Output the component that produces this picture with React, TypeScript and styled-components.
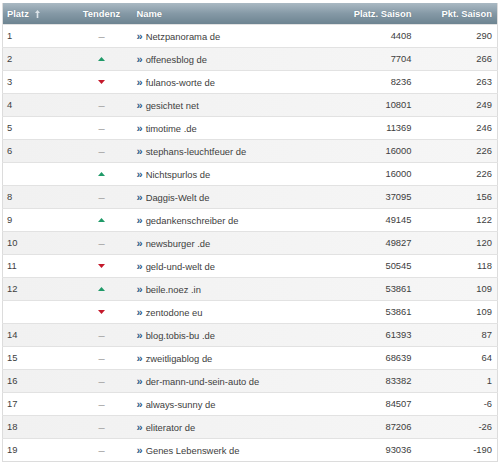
import React from "react";
import styled, { createGlobalStyle } from "styled-components";

const Global = createGlobalStyle`
  html, body { margin: 0; padding: 0; background: #fff; }
  body { font-family: "Liberation Sans", Arial, sans-serif; }
`;

const Wrap = styled.div`
  padding: 3px 3px 0 2px;
`;

const Table = styled.table`
  width: 495px;
  border-collapse: collapse;
  table-layout: fixed;
  font-family: "Liberation Sans", Arial, sans-serif;
  font-size: 9.4px;
  color: #404040;
  border-left: 1px solid #dcdcdc;
  border-right: 1px solid #dcdcdc;
  border-bottom: 1px solid #dcdcdc;
`;

const HeadRow = styled.tr`
  height: 21px;
  background: linear-gradient(to bottom, #aab9c3 0%, #8599a6 50%, #6d8491 100%);
`;

const Th = styled.th<{ $align?: string; $pr?: number; $pl?: number }>`
  color: #fff;
  font-weight: bold;
  font-size: 9.4px;
  text-align: ${(p) => p.$align || "left"};
  padding: 0 ${(p) => p.$pr ?? 4}px 0 ${(p) => p.$pl ?? 4}px;
  text-shadow: 0 0 1px rgba(60, 80, 95, 0.5);
  white-space: nowrap;
`;

const SortIcon = styled.svg`
  margin-left: 6px;
  vertical-align: -1px;
`;

const Row = styled.tr<{ $alt: boolean }>`
  height: 23px;
  background: ${(p) =>
    p.$alt ? "linear-gradient(to right, #f1f1f1, #f6f6f6)" : "#fff"};
  border-top: 1px solid #e2e2e2;
`;

const Td = styled.td<{ $align?: string; $pr?: number; $pl?: number }>`
  text-align: ${(p) => p.$align || "left"};
  padding: 0 ${(p) => p.$pr ?? 4}px 0 ${(p) => p.$pl ?? 4}px;
  white-space: nowrap;
  overflow: hidden;
`;

const Dash = styled.span`
  color: #a0a0a0;
  font-size: 11px;
`;

const Chevron = styled.span`
  color: #2f5c88;
  font-weight: bold;
  font-size: 11px;
  margin-right: 3px;
`;

type Trend = "up" | "down" | "same";

const TrendIcon = ({ t }: { t: Trend }) => {
  if (t === "same") return <Dash>–</Dash>;
  if (t === "up")
    return (
      <svg width="7" height="4" viewBox="0 0 7 4" style={{ verticalAlign: 1 }}>
        <polygon points="0,4 7,4 3.5,0" fill="#1f9a68" />
      </svg>
    );
  return (
    <svg width="7" height="4" viewBox="0 0 7 4" style={{ verticalAlign: 1 }}>
      <polygon points="0,0 7,0 3.5,4" fill="#c4182a" />
    </svg>
  );
};

const data: [string, Trend, string, number, number][] = [
  ["1", "same", "Netzpanorama de", 4408, 290],
  ["2", "up", "offenesblog de", 7704, 266],
  ["3", "down", "fulanos-worte de", 8236, 263],
  ["4", "same", "gesichtet net", 10801, 249],
  ["5", "same", "timotime .de", 11369, 246],
  ["6", "same", "stephans-leuchtfeuer de", 16000, 226],
  ["", "up", "Nichtspurlos de", 16000, 226],
  ["8", "same", "Daggis-Welt de", 37095, 156],
  ["9", "up", "gedankenschreiber de", 49145, 122],
  ["10", "same", "newsburger .de", 49827, 120],
  ["11", "down", "geld-und-welt de", 50545, 118],
  ["12", "up", "beile.noez .in", 53861, 109],
  ["", "down", "zentodone eu", 53861, 109],
  ["14", "same", "blog.tobis-bu .de", 61393, 87],
  ["15", "same", "zweitligablog de", 68639, 64],
  ["16", "same", "der-mann-und-sein-auto de", 83382, 1],
  ["17", "same", "always-sunny de", 84507, -6],
  ["18", "same", "eliterator de", 87206, -26],
  ["19", "same", "Genes Lebenswerk de", 93036, -190],
];

export default function App() {
  return (
    <Wrap>
      <Global />
      <Table>
        <colgroup>
          <col style={{ width: 68 }} />
          <col style={{ width: 62 }} />
          <col style={{ width: 170 }} />
          <col style={{ width: 112 }} />
          <col style={{ width: 83 }} />
        </colgroup>
        <thead>
          <HeadRow>
            <Th>
              Platz
              <SortIcon width="5" height="8" viewBox="0 0 5 8">
                <polygon points="2.5,0 5,3 3.3,3 3.3,8 1.7,8 1.7,3 0,3" fill="#dde4e9" />
              </SortIcon>
            </Th>
            <Th $align="center">Tendenz</Th>
            <Th>Name</Th>
            <Th $align="right" $pr={3}>Platz. Saison</Th>
            <Th $align="right" $pr={5}>Pkt. Saison</Th>
          </HeadRow>
        </thead>
        <tbody>
          {data.map(([p, t, n, ps, pk], i) => (
            <Row key={i} $alt={i % 2 === 1}>
              <Td>{p}</Td>
              <Td $align="center">
                <TrendIcon t={t} />
              </Td>
              <Td>
                <Chevron>»</Chevron>
                {n}
              </Td>
              <Td $align="right" $pr={3}>{ps}</Td>
              <Td $align="right" $pr={5}>{pk}</Td>
            </Row>
          ))}
        </tbody>
      </Table>
    </Wrap>
  );
}
